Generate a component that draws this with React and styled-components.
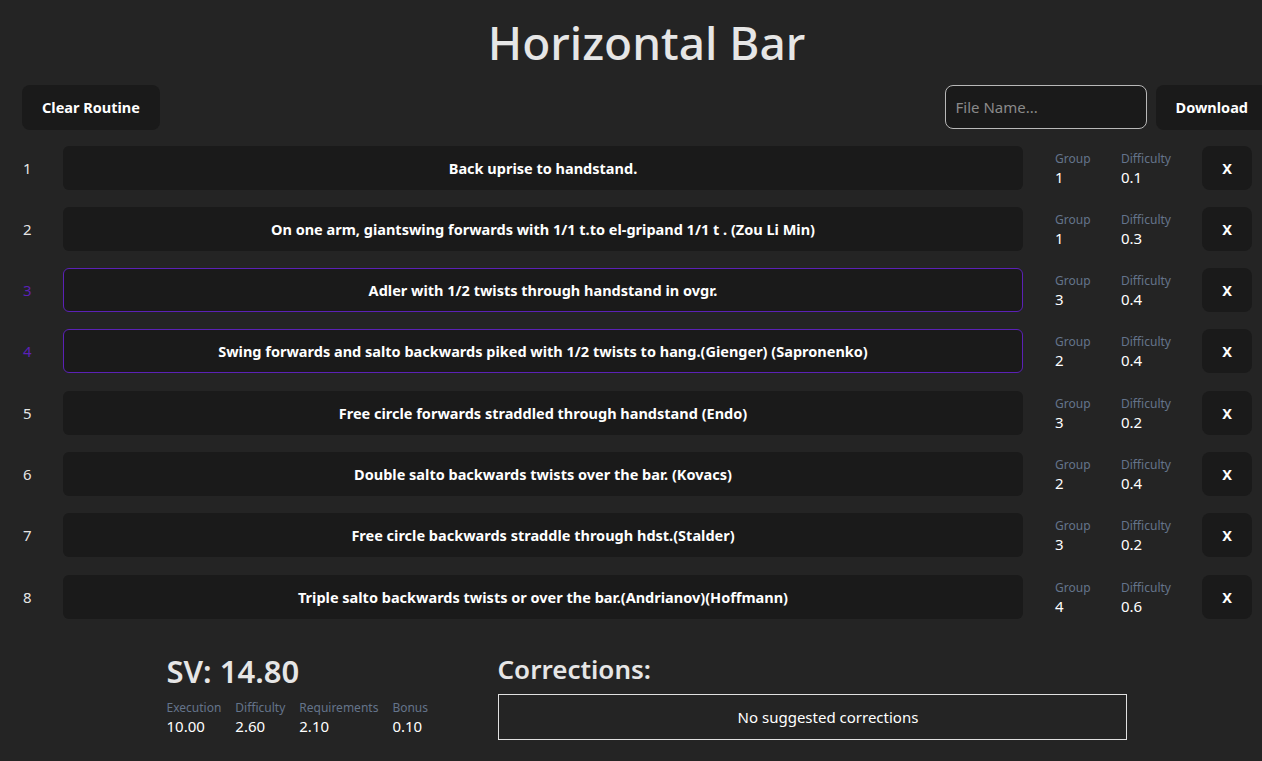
import React, { useState } from 'react';
import styled, { createGlobalStyle } from 'styled-components';

const GlobalStyle = createGlobalStyle`
  html, body {
    margin: 0;
    padding: 0;
    background-color: #242424;
    overflow-x: hidden;
  }
  body {
    font-family: "Noto Sans", "Open Sans", sans-serif;
    color: rgba(255, 255, 255, 0.87);
  }
`;

const Wrapper = styled.div`
  width: 1293px;
`;

const Title = styled.h1`
  margin: 0;
  padding: 17px 0 17px;
  text-align: center;
  font-size: 46px;
  line-height: 1.1;
  font-weight: 500;
  color: #e6e6e6;
`;

const Toolbar = styled.div`
  display: flex;
  justify-content: space-between;
  align-items: center;
  padding: 0 25px 0 22px;
  margin-bottom: 16px;
`;

const RightTools = styled.div`
  display: flex;
  gap: 9px;
`;

const Btn = styled.button`
  background-color: #1a1a1a;
  color: #ffffff;
  border: 1px solid transparent;
  border-radius: 8px;
  font-family: inherit;
  font-size: 14.5px;
  font-weight: 700;
  height: ${(p) => p.$h || 45}px;
  width: ${(p) => (p.$w ? `${p.$w}px` : 'auto')};
  padding: 0 ${(p) => (p.$w ? 0 : 19)}px;
  cursor: pointer;
  &:hover {
    border-color: #646cff;
  }
`;

const FileInput = styled.input`
  width: 202px;
  height: 44px;
  box-sizing: border-box;
  padding: 0 10px;
  background-color: #1a1a1a;
  border: 1px solid #b8b8b8;
  border-radius: 8px;
  color: #fff;
  font-family: inherit;
  font-size: 15px;
  &::placeholder {
    color: #8a8a8a;
  }
`;

const List = styled.div`
  display: flex;
  flex-direction: column;
  gap: 17.3px;
  padding-left: 22px;
`;

const Row = styled.div`
  display: flex;
  align-items: center;
  height: 44px;
`;

const Index = styled.div`
  width: 41px;
  padding-left: 1px;
  box-sizing: border-box;
  font-size: 15px;
  color: ${(p) => (p.$selected ? '#5b21b6' : 'rgba(255, 255, 255, 0.9)')};
`;

const Element = styled.div`
  width: 960px;
  height: 44px;
  box-sizing: border-box;
  display: flex;
  align-items: center;
  justify-content: center;
  background-color: #1a1a1a;
  border: 1px solid ${(p) => (p.$selected ? '#5b21b6' : 'transparent')};
  border-radius: 6px;
  font-size: 14.5px;
  font-weight: 700;
  color: #ffffff;
  cursor: pointer;
`;

const Stats = styled.div`
  width: 179px;
  box-sizing: border-box;
  padding-left: 32px;
  display: flex;
  padding-top: 2px;
`;

const Stat = styled.div`
  width: ${(p) => p.$w}px;
  display: flex;
  flex-direction: column;
`;

const Label = styled.span`
  font-size: 12px;
  line-height: 16px;
  color: #64748b;
`;

const Value = styled.span`
  font-size: 15px;
  line-height: 20px;
  color: #ffffff;
`;

const Bottom = styled.div`
  display: flex;
  justify-content: center;
  margin-top: 32px;
`;

const Score = styled.div`
  width: 331px;
`;

const SV = styled.div`
  font-size: 31px;
  font-weight: 600;
  line-height: 40px;
  color: #e6e6e6;
  margin-bottom: 9px;
`;

const ScoreParts = styled.div`
  display: flex;
  gap: 14px;
`;

const Corrections = styled.div`
  width: 629px;
`;

const CorrTitle = styled.h2`
  margin: 0 0 7px;
  font-size: 26px;
  font-weight: 600;
  line-height: 36px;
  color: #e6e6e6;
`;

const CorrBox = styled.div`
  height: 46px;
  box-sizing: border-box;
  padding-left: 32px;
  border: 1px solid #e0e0e0;
  display: flex;
  align-items: center;
  justify-content: center;
  font-size: 15px;
  color: #ffffff;
`;

const initial = [
  { name: 'Back uprise to handstand.', group: 1, diff: '0.1' },
  { name: 'On one arm, giantswing forwards with 1/1 t.to el-gripand 1/1 t . (Zou Li Min)', group: 1, diff: '0.3' },
  { name: 'Adler with 1/2 twists through handstand in ovgr.', group: 3, diff: '0.4', selected: true },
  { name: 'Swing forwards and salto backwards piked with 1/2 twists to hang.(Gienger) (Sapronenko)', group: 2, diff: '0.4', selected: true },
  { name: 'Free circle forwards straddled through handstand (Endo)', group: 3, diff: '0.2' },
  { name: 'Double salto backwards twists over the bar. (Kovacs)', group: 2, diff: '0.4' },
  { name: 'Free circle backwards straddle through hdst.(Stalder)', group: 3, diff: '0.2' },
  { name: 'Triple salto backwards twists or over the bar.(Andrianov)(Hoffmann)', group: 4, diff: '0.6' },
];

const parts = [
  { label: 'Execution', value: '10.00' },
  { label: 'Difficulty', value: '2.60' },
  { label: 'Requirements', value: '2.10' },
  { label: 'Bonus', value: '0.10' },
];

export default function App() {
  const [routine, setRoutine] = useState(initial);
  const [fileName, setFileName] = useState('');

  return (
    <Wrapper>
      <GlobalStyle />
      <Title>Horizontal Bar</Title>
      <Toolbar>
        <Btn onClick={() => setRoutine([])}>Clear Routine</Btn>
        <RightTools>
          <FileInput
            type='text'
            placeholder='File Name...'
            value={fileName}
            onChange={(e) => setFileName(e.target.value)}
          />
          <Btn>Download</Btn>
        </RightTools>
      </Toolbar>
      <List>
        {routine.map((el, i) => (
          <Row key={i}>
            <Index $selected={el.selected}>{i + 1}</Index>
            <Element $selected={el.selected}>{el.name}</Element>
            <Stats>
              <Stat $w={66}>
                <Label>Group</Label>
                <Value>{el.group}</Value>
              </Stat>
              <Stat $w={70}>
                <Label>Difficulty</Label>
                <Value>{el.diff}</Value>
              </Stat>
            </Stats>
            <Btn $w={50} $h={44} onClick={() => setRoutine(routine.filter((_, j) => j !== i))}>
              X
            </Btn>
          </Row>
        ))}
      </List>
      <Bottom>
        <Score>
          <SV>SV: 14.80</SV>
          <ScoreParts>
            {parts.map((p) => (
              <Stat key={p.label}>
                <Label>{p.label}</Label>
                <Value>{p.value}</Value>
              </Stat>
            ))}
          </ScoreParts>
        </Score>
        <Corrections>
          <CorrTitle>Corrections:</CorrTitle>
          <CorrBox>No suggested corrections</CorrBox>
        </Corrections>
      </Bottom>
    </Wrapper>
  );
}
